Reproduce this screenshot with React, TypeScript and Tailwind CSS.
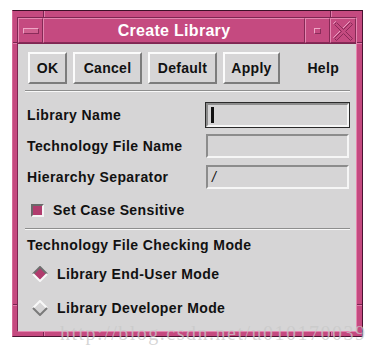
import React from "react";

const font = { fontFamily: '"Liberation Sans", Arial, sans-serif' };

function Notch({ cls }: { cls: string }) {
  return <div className={"absolute " + cls} />;
}

function Btn({ w, children }: { w: string; children: React.ReactNode }) {
  return (
    <div
      className={
        w +
        " h-[32px] flex items-center justify-center border-2 border-t-[#fbfbfb] border-l-[#fbfbfb] border-b-[#7c7c7c] border-r-[#7c7c7c] bg-[#d6d5d6] text-[14px] font-bold tracking-[0.3px] text-[#111]"
      }
    >
      {children}
    </div>
  );
}

function Field({ focus, children }: { focus?: boolean; children?: React.ReactNode }) {
  return (
    <div className={"h-[26px] border " + (focus ? "border-[#2a2a2a]" : "border-transparent")}>
      <div className="h-[24px] border-2 border-t-[#8c8c8c] border-l-[#8c8c8c] border-b-[#f6f6f6] border-r-[#f6f6f6] bg-[#d6d5d6] flex items-center pl-[2px]">
        {children}
      </div>
    </div>
  );
}

function Sep() {
  return <div className="ml-[7px] mr-[6px] h-[2px] border-t border-t-[#8e8e8e] border-b border-b-[#f8f8f8]" />;
}

function Diamond({ on }: { on?: boolean }) {
  return (
    <svg width="16" height="16" viewBox="0 0 16 16">
      <polygon points="8,1 15,8 8,15 1,8" fill={on ? "#b13c6e" : "#d6d5d6"} />
      <polyline points="1,8 8,1 15,8" fill="none" stroke={on ? "#6e6e6e" : "#f8f8f8"} strokeWidth="2" />
      <polyline points="1,8 8,15 15,8" fill="none" stroke={on ? "#f8f8f8" : "#7a7a7a"} strokeWidth="2" />
    </svg>
  );
}

export default function App() {
  return (
    <div className="w-[381px] h-[353px] bg-white relative pt-[10px] pl-[12px] overflow-hidden" style={font}>
      <div className="relative w-[351px] h-[327px] bg-[#c54a80] border border-t-[#3c1028] border-l-[#d66a98] border-r-[#4a1432] border-b-[#4a1432] pt-[6px] pl-[4px] pr-[5px] pb-[4px]">
        {/* frame notches */}
        <Notch cls="left-[30px] top-0 w-[2px] h-[6px] border-l border-l-[#7a2450] border-r border-r-[#e07aa8]" />
        <Notch cls="left-[317px] top-0 w-[2px] h-[6px] border-l border-l-[#7a2450] border-r border-r-[#e07aa8]" />
        <Notch cls="left-[30px] bottom-0 w-[2px] h-[4px] border-l border-l-[#7a2450] border-r border-r-[#e07aa8]" />
        <Notch cls="left-[317px] bottom-0 w-[2px] h-[4px] border-l border-l-[#7a2450] border-r border-r-[#e07aa8]" />
        <Notch cls="left-0 top-[31px] w-[4px] h-[2px] border-t border-t-[#7a2450] border-b border-b-[#e07aa8]" />
        <Notch cls="right-0 top-[31px] w-[5px] h-[2px] border-t border-t-[#7a2450] border-b border-b-[#e07aa8]" />
        <Notch cls="left-0 top-[293px] w-[4px] h-[2px] border-t border-t-[#7a2450] border-b border-b-[#e07aa8]" />
        <Notch cls="right-0 top-[293px] w-[5px] h-[2px] border-t border-t-[#7a2450] border-b border-b-[#e07aa8]" />

        <div className="w-full h-full flex flex-col border border-t-[#7e2652] border-l-[#7e2652] border-b-[#e487b0] border-r-[#e487b0]">
          {/* title bar */}
          <div className="h-[25px] flex shrink-0">
            <div className="w-[25px] h-[25px] border border-t-[#e487b0] border-l-[#e487b0] border-b-[#862a56] border-r-[#862a56] flex items-center justify-center">
              <div className="w-[16px] h-[6px] border border-t-[#eea6c6] border-l-[#eea6c6] border-b-[#8a2c5a] border-r-[#8a2c5a] bg-[#d0608f]" />
            </div>
            <div className="flex-1 h-[25px] border border-t-[#e487b0] border-l-[#e487b0] border-b-[#862a56] border-r-[#862a56] flex items-center justify-center text-white text-[16px] font-bold tracking-[0.3px]">
              Create Library
            </div>
            <div className="w-[25px] h-[25px] border border-t-[#e487b0] border-l-[#e487b0] border-b-[#862a56] border-r-[#862a56] flex items-center justify-center">
              <div className="w-[7px] h-[6px] border border-t-[#eea6c6] border-l-[#eea6c6] border-b-[#8a2c5a] border-r-[#8a2c5a]" />
            </div>
            <div className="w-[26px] h-[25px] border border-t-[#e487b0] border-l-[#e487b0] border-b-[#862a56] border-r-[#862a56] flex items-center justify-center">
              <svg width="20" height="20" viewBox="0 0 20 20">
                <polygon
                  points="1,3 3,1 10,8 17,1 19,3 12,10 19,17 17,19 10,12 3,19 1,17 8,10"
                  fill="none"
                  stroke="#e9a0c2"
                  strokeWidth="1"
                  transform="translate(-0.5,-0.5)"
                />
                <polygon
                  points="1,3 3,1 10,8 17,1 19,3 12,10 19,17 17,19 10,12 3,19 1,17 8,10"
                  fill="#c54a80"
                  stroke="#8a2a58"
                  strokeWidth="1"
                  transform="translate(0.5,0.5)"
                />
              </svg>
            </div>
          </div>

          {/* content */}
          <div className="flex-1 bg-[#d6d5d6] flex flex-col border-t border-t-[#7e2652]">
            <div className="flex items-center pl-[10px] pt-[8px] gap-[6px]">
              <Btn w="w-[39px]">OK</Btn>
              <Btn w="w-[69px]">Cancel</Btn>
              <Btn w="w-[69px]">Default</Btn>
              <Btn w="w-[57px]">Apply</Btn>
              <span className="ml-auto mr-[17px] text-[14px] font-bold tracking-[0.3px] text-[#111]">Help</span>
            </div>
            <div className="mt-[6px]">
              <Sep />
            </div>

            <div className="mt-[10px] grid grid-cols-[1fr_145px] gap-y-[5px] pl-[9px] pr-[6px] text-[14px] font-bold tracking-[0.4px] text-[#111]">
              <div className="h-[26px] flex items-center">Library Name</div>
              <Field focus>
                <div className="w-[3px] h-[16px] bg-[#111] ml-[1px]" />
              </Field>
              <div className="h-[26px] flex items-center">Technology File Name</div>
              <Field />
              <div className="h-[26px] flex items-center">Hierarchy Separator</div>
              <Field>
                <span className="font-normal text-[14px] ml-[2px] italic">/</span>
              </Field>
            </div>

            <div className="mt-[10px] h-[20px] flex items-center pl-[13px] text-[14px] font-bold tracking-[0.4px] text-[#111]">
              <div className="w-[13px] h-[13px] border-2 border-t-[#6a6a6a] border-l-[#6a6a6a] border-b-[#f4f4f4] border-r-[#f4f4f4] bg-[#b13c6e]" />
              <span className="ml-[9px]">Set Case Sensitive</span>
            </div>

            <div className="mt-[8px]">
              <Sep />
            </div>

            <div className="mt-[5px] h-[20px] flex items-center pl-[9px] text-[14px] font-bold tracking-[0.4px] text-[#111]">
              Technology File Checking Mode
            </div>
            <div className="mt-[9px] h-[20px] flex items-center pl-[14px] text-[14px] font-bold tracking-[0.4px] text-[#111]">
              <Diamond on />
              <span className="ml-[9px]">Library End-User Mode</span>
            </div>
            <div className="mt-[14px] h-[20px] flex items-center pl-[14px] text-[14px] font-bold tracking-[0.4px] text-[#111]">
              <Diamond />
              <span className="ml-[9px]">Library Developer Mode</span>
            </div>
          </div>
        </div>
      </div>
      <div
        className="absolute left-[60px] top-[318px] text-[20px] tracking-[1.5px] text-[rgba(200,200,200,0.75)] whitespace-nowrap"
        style={{ fontFamily: '"Liberation Serif", "Times New Roman", serif' }}
      >
        http://blog.csdn.net/u010170039
      </div>
    </div>
  );
}
